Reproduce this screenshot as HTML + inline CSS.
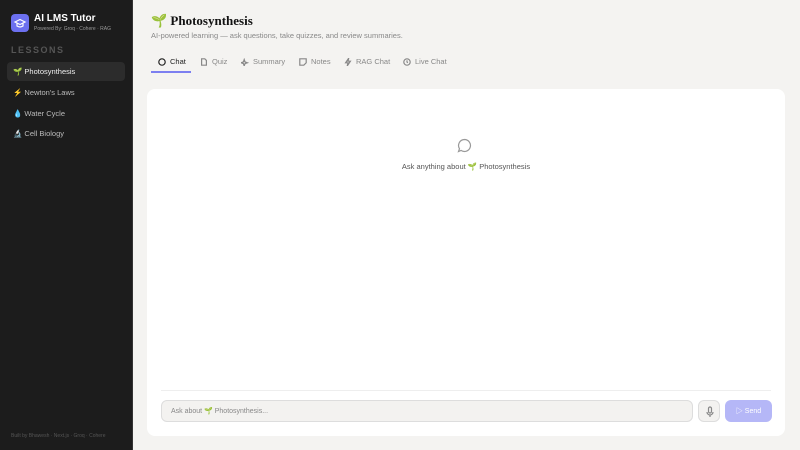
<!DOCTYPE html>
<html><head><meta charset="utf-8"><style>
*{box-sizing:border-box;margin:0;padding:0}
body{width:800px;height:450px;overflow:hidden;font-family:"Liberation Sans","Noto Sans CJK SC",sans-serif;background:#f4f3f1;position:relative}
.sb{position:absolute;left:0;top:0;width:133px;height:450px;background:#1c1c1c;border-right:1px solid #333}
.logo{position:absolute;left:11px;top:14px;width:18px;height:18px;border-radius:4px;background:#6c70f0}
.t1{position:absolute;left:34px;top:13px;color:#fff;font-weight:bold;font-size:10px}
.t2{position:absolute;left:34px;top:26px;color:#999;font-size:5px}
.les{position:absolute;left:11px;top:45px;color:#555;font-size:9px;letter-spacing:1.5px;font-weight:bold}
.it{position:absolute;left:7px;width:118px;height:19px;border-radius:4px;color:#bbb;font-size:7.5px;padding:5px 0 0 6px}
.it.a{background:#2c2c2c;color:#eee}
.foot{position:absolute;left:11px;top:433px;color:#555;font-size:5px}
h1{position:absolute;left:151px;top:13px;font-family:"Liberation Serif",serif;font-size:13px;color:#111}
.sub{position:absolute;left:151px;top:31px;font-size:7.5px;color:#888}
.tabs{position:absolute;left:151px;top:57px;font-size:7.5px;color:#888}
.tabs span{position:absolute;white-space:nowrap;display:flex;align-items:center;gap:4px}
.tabs svg{width:8px;height:8px;fill:none;stroke:currentColor;stroke-width:1.5}
.ul{position:absolute;left:151px;top:71px;width:40px;height:2px;background:#7c7ff0}
.card{position:absolute;left:147px;top:89px;width:638px;height:347px;background:#fff;border-radius:8px}
.ask{position:absolute;left:0;width:100%;text-align:center;font-size:7.5px;color:#555}
.line{position:absolute;left:14px;right:14px;top:301px;border-top:1px solid #eee}
.inp{position:absolute;left:14px;top:311px;width:532px;height:22px;border:1px solid #ddd;border-radius:6px;background:#f3f2f0;font-size:7px;color:#888;padding:6px 9px}
.mic{position:absolute;left:551px;top:311px;width:22px;height:22px;border:1px solid #ddd;border-radius:6px;background:#f3f2f0}
.send{position:absolute;left:578px;top:311px;width:47px;height:22px;border-radius:6px;background:#b5b7f7;color:#fff;font-size:7px;text-align:center;padding-top:6px}
</style></head><body>
<div class="sb">
<div class="logo"><svg width="18" height="18" viewBox="0 0 18 18" fill="none" stroke="#fff" stroke-width="1.2"><path d="M4 8l5-2.5 5 2.5-5 2.5z"/><path d="M6 9.5v2.5c2 1.3 4 1.3 6 0V9.5"/></svg></div>
<div class="t1">AI LMS Tutor</div><div class="t2">Powered By: Groq · Cohere · RAG</div>
<div class="les">LESSONS</div>
<div class="it a" style="top:62px">🌱 Photosynthesis</div>
<div class="it" style="top:83px">⚡ Newton's Laws</div>
<div class="it" style="top:104px">💧 Water Cycle</div>
<div class="it" style="top:124px">🔬 Cell Biology</div>
<div class="foot">Built by Bhawesh · Next.js · Groq · Cohere</div>
</div>
<h1>🌱 Photosynthesis</h1>
<div class="sub">AI-powered learning — ask questions, take quizzes, and review summaries.</div>
<div class="tabs">
<span style="left:7px;color:#222"><svg viewBox="0 0 10 10"><circle cx="5" cy="5" r="4"/></svg>Chat</span>
<span style="left:49px"><svg viewBox="0 0 10 10"><path d="M2 1h4l2 2v6H2z"/></svg>Quiz</span>
<span style="left:90px"><svg viewBox="0 0 10 10"><path d="M4 2l1 3 3 1-3 1-1 3-1-3-3-1 3-1z"/></svg>Summary</span>
<span style="left:148px"><svg viewBox="0 0 10 10"><path d="M1 1h8v5l-3 3H1z"/></svg>Notes</span>
<span style="left:193px"><svg viewBox="0 0 10 10"><path d="M6 0L2 6h3l-1 4 4-6H5z"/></svg>RAG Chat</span>
<span style="left:252px"><svg viewBox="0 0 10 10"><circle cx="5" cy="5" r="4"/><path d="M5 3v2l1 1"/></svg>Live Chat</span>
</div>
<div class="ul"></div>
<div class="card">
<svg style="position:absolute;left:310px;top:49px" width="15" height="15" viewBox="0 0 15 15" fill="none" stroke="#999" stroke-width="1.2"><path d="M7.5 1.5a6 6 0 1 1-3.5 10.9L1.5 13.5l1-2.8A6 6 0 0 1 7.5 1.5z"/></svg>
<div class="ask" style="top:73px">Ask anything about 🌱 Photosynthesis</div>
<div class="line"></div>
<div class="inp">Ask about 🌱 Photosynthesis...</div>
<div class="mic"><svg width="22" height="22" viewBox="0 0 22 22" fill="none" stroke="#888" stroke-width="1.2"><rect x="9.5" y="6" width="3" height="6" rx="1.5"/><path d="M8 11a3 3 0 0 0 6 0M11 14v2"/></svg></div>
<div class="send">▷ Send</div>
</div>
</body></html>
